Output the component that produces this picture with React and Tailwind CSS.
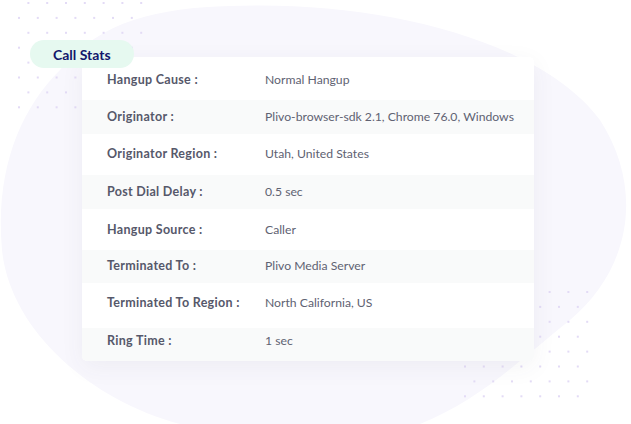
import React from 'react';

const rows = [
    { label: 'Hangup Cause :', value: 'Normal Hangup', h: 'h-[43px] pt-[3px]', bg: 'bg-white' },
    { label: 'Originator :', value: 'Plivo-browser-sdk 2.1, Chrome 76.0, Windows', h: 'h-[34px]', bg: 'bg-[#f9fafa]' },
    { label: 'Originator Region :', value: 'Utah, United States', h: 'h-[41px]', bg: 'bg-white' },
    { label: 'Post Dial Delay :', value: '0.5 sec', h: 'h-[34px]', bg: 'bg-[#f9fafa]' },
    { label: 'Hangup Source :', value: 'Caller', h: 'h-[41px] pt-[1px]', bg: 'bg-white' },
    { label: 'Terminated To :', value: 'Plivo Media Server', h: 'h-[33px]', bg: 'bg-[#f9fafa]' },
    { label: 'Terminated To Region :', value: 'North California, US', h: 'h-[45px] pb-[4px]', bg: 'bg-white' },
    { label: 'Ring Time :', value: '1 sec', h: 'h-[33px] pb-[6px]', bg: 'bg-[#f9fafa]' },
];

// staggered dot grid, 7 columns x 8 rows
const Dots = ({ className }) => {
    const dots = [];
    for (let r = 0; r < 8; r++) {
        for (let c = 0; c < 7; c++) {
            const x = 1 + c * 18.8 + (r % 2 === 0 ? 9.4 : 0);
            const y = 1 + r * 14.9;
            dots.push(<rect key={`${r}-${c}`} x={x} y={y} width="2" height="2" fill="#e3dbf6" />);
        }
    }
    return (
        <svg className={className} width="136" height="112" viewBox="0 0 136 112">
            {dots}
        </svg>
    );
};

const App = () => {
    return (
        <div className="relative w-[631px] h-[424px] overflow-hidden bg-white" style={{ fontFamily: 'Lato, "Open Sans", sans-serif' }}>
            {/* background blob + dots */}
            <svg className="absolute inset-0" width="631" height="424" viewBox="0 0 631 424">
                <path
                    d="M 60 70 C 100 20, 160 8, 230 6 C 380 0, 540 40, 600 120 C 645 190, 630 270, 570 320 C 520 360, 480 400, 420 424 L 180 424 C 90 400, 10 330, 2 250 C -5 170, 20 110, 60 70 Z"
                    fill="#f8f7fd"
                />
            </svg>
            <Dots className="absolute left-[17px] top-[1px]" />
            <Dots className="absolute left-[463px] top-[290px]" />

            <div className="relative pt-[40px] pl-[30px]">
                {/* Call Stats pill */}
                <div className="relative z-10 inline-flex items-center h-[28px] px-[23px] rounded-full bg-[#e6f9f0] text-[14px] font-bold text-[#12176b]">
                    Call Stats
                </div>

                {/* Stats card */}
                <div className="-mt-[11px] ml-[52px] w-[452px] rounded-[5px] bg-white overflow-hidden shadow-[0_6px_24px_rgba(60,60,90,0.06)]">
                    {rows.map((row) => (
                        <div key={row.label} className={`flex items-center pl-[25px] ${row.h} ${row.bg}`}>
                            <span className="w-[158px] shrink-0 text-[12.5px] tracking-[0.3px] font-bold text-[#56586a]">{row.label}</span>
                            <span className="text-[12.2px] text-[#606272]">{row.value}</span>
                        </div>
                    ))}
                </div>
            </div>
        </div>
    );
};

export default App;
